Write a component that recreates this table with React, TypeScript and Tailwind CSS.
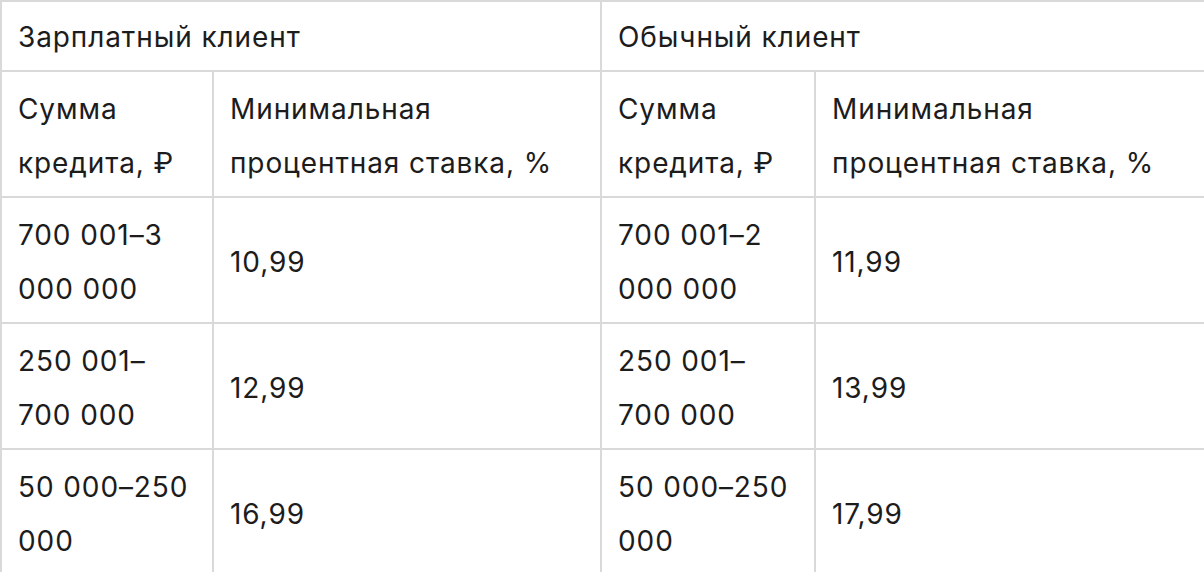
import React from 'react';

const rows = [
  { salary: '700 001–3 000 000', salaryRate: '10,99', regular: '700 001–2 000 000', regularRate: '11,99' },
  { salary: '250 001–700 000', salaryRate: '12,99', regular: '250 001–700 000', regularRate: '13,99' },
  { salary: '50 000–250 000', salaryRate: '16,99', regular: '50 000–250 000', regularRate: '17,99' },
];

const cell = 'border-2 border-[#d9d9d9] px-[16px] pt-[10px] pb-[6px] align-middle text-left font-normal';
const groupCell = 'border-2 border-[#d9d9d9] px-[16px] pt-[9px] pb-[6px] align-middle text-left font-normal leading-[53px]';

export default function App() {
  return (
    <div className="w-[1204px] bg-white text-[#1c1c1c] text-[28px] leading-[54px] tracking-[0.9px] font-['Inter',sans-serif]">
      <table className="w-[1204px] table-fixed border-collapse">
        <colgroup>
          <col className="w-[212px]" />
          <col className="w-[388px]" />
          <col className="w-[214px]" />
          <col className="w-[390px]" />
        </colgroup>
        <thead>
          <tr>
            <th colSpan={2} className={groupCell}>Зарплатный клиент</th>
            <th colSpan={2} className={groupCell}>Обычный клиент</th>
          </tr>
          <tr>
            <th className={cell}>Сумма кредита, ₽</th>
            <th className={cell}>Минимальная процентная ставка, %</th>
            <th className={cell}>Сумма кредита, ₽</th>
            <th className={cell}>Минимальная процентная ставка, %</th>
          </tr>
        </thead>
        <tbody>
          {rows.map((r) => (
            <tr key={r.salaryRate}>
              <td className={cell}>{r.salary}</td>
              <td className={cell}>{r.salaryRate}</td>
              <td className={cell}>{r.regular}</td>
              <td className={cell}>{r.regularRate}</td>
            </tr>
          ))}
        </tbody>
      </table>
    </div>
  );
}
